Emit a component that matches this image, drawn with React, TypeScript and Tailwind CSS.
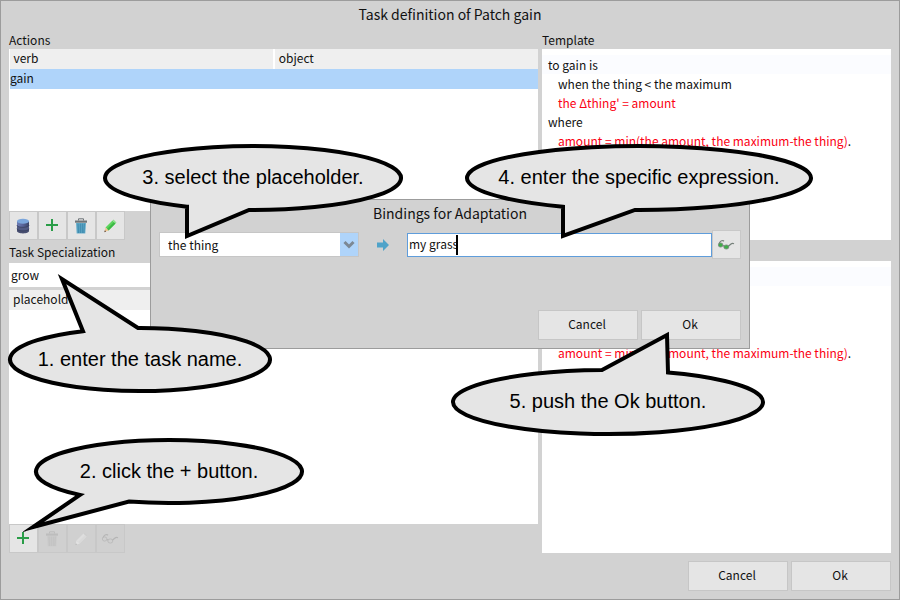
import type { ReactNode } from "react";

type IconProps = { muted?: boolean };

function DatabaseIcon() {
  return (
    <svg width="16" height="16" viewBox="0 0 16 16" aria-hidden="true">
      <defs>
        <linearGradient id="dbBody" x1="0" x2="1" y1="0" y2="0">
          <stop offset="0" stopColor="#6d7cb4" />
          <stop offset="0.45" stopColor="#5a669c" />
          <stop offset="1" stopColor="#3b4468" />
        </linearGradient>
      </defs>
      <path d="M2 10.500v2.500c0 1.300 2.700 2.400 6 2.400s6-1.100 6-2.400v-2.500z" fill="#474e70" />
      <path d="M2 6.800v3.700c0 1.300 2.700 2.300 6 2.300s6-1 6-2.300V6.800z" fill="#515a83" />
      <path d="M2 3v4c0 1.300 2.700 2.300 6 2.300s6-1 6-2.300V3z" fill="url(#dbBody)" />
      <path d="M2 7c0 1.300 2.700 2.300 6 2.300s6-1 6-2.300M2 10.600c0 1.300 2.700 2.300 6 2.300s6-1 6-2.300" fill="none" stroke="#343b58" strokeWidth="0.7" />
      <ellipse cx="8" cy="3.200" rx="6" ry="2.500" fill="#7ba6dc" />
    </svg>
  );
}

function PlusIcon() {
  return (
    <svg width="16" height="16" viewBox="0 0 16 16" className="-mt-px" aria-hidden="true">
      <path d="M8 2v12M2 8h12" stroke="#2a9d48" strokeWidth="2" fill="none" />
    </svg>
  );
}

function TrashIcon({ muted }: IconProps) {
  const body = muted ? "#cbcbcb" : "#66aecb";
  const stripe = muted ? "#c1c1c1" : "#3582a8";
  const lid = muted ? "#bdbdbd" : "#6d7478";
  return (
    <svg width="16" height="16" viewBox="0 0 16 16" aria-hidden="true">
      <path d="M5.500 2.500V.8h5v1.700" fill="none" stroke={lid} />
      <path d="M2 2.500h12v2.200H2z" fill={lid} />
      <path d="M3 5h10l-.7 10.500H3.700z" fill={body} />
      <path d="M5 5.500l.3 9.500M7.200 5.500V15M9.200 5.500V15M11.200 5.500l-.3 9.500" stroke={stripe} fill="none" />
    </svg>
  );
}

function PencilIcon({ muted }: IconProps) {
  return (
    <svg width="16" height="16" viewBox="0 0 16 16" aria-hidden="true">
      <path d="M10.500 2.500l3 3-7 7-3-3z" fill={muted ? "#dedede" : "#5bd55c"} />
      <path d="M12 4l1.500 1.500-7 7L5 11z" fill={muted ? "#d9d9d9" : "#3cb945"} />
      <path d="M3.500 9.500l3 3L2.500 14z" fill={muted ? "#e2e2e2" : "#f0c592"} />
      <path d="M2.900 12.300L2.300 14.200l1.800-.7z" fill={muted ? "#b5b5b5" : "#4a3b30"} />
      <path d="M10.500 2.500l1-1 3 3-1 1z" fill={muted ? "#cdcdcd" : "#8ee08d"} />
    </svg>
  );
}

function GlassesIcon({ muted }: IconProps) {
  const wire = muted ? "#b5b5b5" : "#75807a";
  return (
    <svg width="18" height="16" viewBox="0 0 18 16" aria-hidden="true">
      <path d="M2 7c.6-2 2.500-3.500 4-3.500l1 .8M11 9.500l3-2.500c1-.8 2-.8 3-.2" fill="none" stroke={wire} strokeWidth="1.200" />
      <path d="M5.500 8.500l2 .6" stroke={wire} strokeWidth="1.200" />
      <ellipse cx="3.600" cy="8" rx="2.300" ry="2.100" fill={muted ? "#cfcfcf" : "#3fae49"} stroke={wire} strokeWidth="0.700" />
      <ellipse cx="9.300" cy="10" rx="2.500" ry="2.100" fill={muted ? "#cfcfcf" : "#3fae49"} stroke={wire} strokeWidth="0.700" />
    </svg>
  );
}

function IconButton({ label, disabled, children }: { label: string; disabled?: boolean; children: ReactNode }) {
  return (
    <button
      type="button"
      aria-label={label}
      disabled={disabled}
      className="flex h-[29px] w-[29px] shrink-0 items-center justify-center border border-[#c8c8c8] bg-[#e5e5e5] pr-px disabled:bg-[#d0d0d0]"
    >
      {children}
    </button>
  );
}

function TextButton({ children }: { children: ReactNode }) {
  return (
    <button type="button" className="flex h-[30px] w-[100px] items-center justify-center border border-[#c6c6c6] bg-[#e5e5e5] pr-0.5 pb-0.5">
      {children}
    </button>
  );
}

type CalloutProps = {
  text: string;
  className: string;
  width: number;
  height: number;
  /** Horizontal positions where the tail leaves the ellipse. */
  from: number;
  to: number;
  tip: [number, number];
};

/** Speech balloon: an ellipse with a pointed tail on its upper or lower side. */
function Callout({ text, className, width, height, from, to, tip }: CalloutProps) {
  const rx = width / 2;
  const ry = height / 2;
  const below = tip[1] > ry;
  const edge = (x: number) => {
    const dy = ry * Math.sqrt(1 - ((x - rx) / rx) ** 2);
    return below ? ry + dy : ry - dy;
  };
  const sweep = below ? 0 : 1;
  const d = `M${from} ${edge(from)}L${tip[0]} ${tip[1]}L${to} ${edge(to)}A${rx} ${ry} 0 1 ${sweep} ${from} ${edge(from)}Z`;
  return (
    <div className={`pointer-events-none absolute z-20 flex items-center justify-center pb-0.5 ${className}`}>
      <svg width={width} height={height} className="absolute inset-0 overflow-visible" aria-hidden="true">
        <path d={d} fill="#e5e5e5" stroke="#000" strokeWidth="4" strokeMiterlimit="10" />
      </svg>
      <span className="relative whitespace-nowrap font-['Liberation_Sans',Arial,sans-serif] text-xl leading-6 text-black">{text}</span>
    </div>
  );
}

function AmountLine() {
  return (
    <div className="pl-4">
      <span className="text-[#fb0013]">amount = min(the amount, the maximum-the thing)</span>.
    </div>
  );
}

export default function App() {
  return (
    <div className="relative flex min-h-screen flex-col border border-[#9c9c9c] bg-[#d2d2d2] px-2 pb-2 font-['Noto_Sans_CJK_SC',sans-serif] text-xs leading-4 text-[#111]">
      <h1 className="pt-[3px] text-center text-sm leading-5">Task definition of Patch gain</h1>

      <main className="grid flex-1 grid-cols-[529fr_349fr] gap-1 pt-2">
        <section className="flex flex-col">
          <h2 className="pb-px">Actions</h2>
          <div className="h-[162px] bg-white">
            <table className="w-full table-fixed border-collapse text-left">
              <thead>
                <tr className="h-5 bg-[#efefef]">
                  <th className="w-1/2 border-r-2 border-white p-0 pb-0.5 pl-1 font-normal">verb</th>
                  <th className="p-0 pb-0.5 pl-1 font-normal">object</th>
                </tr>
              </thead>
              <tbody>
                <tr className="h-5 bg-[#afd4fa]">
                  <td className="border-l border-white p-0 pb-0.5">gain</td>
                  <td className="p-0" />
                </tr>
              </tbody>
            </table>
          </div>
          <div className="flex">
            <IconButton label="Inspect"><DatabaseIcon /></IconButton>
            <IconButton label="Add action"><PlusIcon /></IconButton>
            <IconButton label="Remove action"><TrashIcon /></IconButton>
            <IconButton label="Edit action"><PencilIcon /></IconButton>
          </div>
          <label htmlFor="task" className="pt-1 pb-[3px]">Task Specialization</label>
          <input id="task" defaultValue="grow" className="h-6 w-full bg-white px-0.5 pb-0.5 outline-none" />
          <div className="mt-[3px] flex-1 bg-white">
            <div className="h-5 bg-[#efefef] pt-px pl-1">placeholder</div>
          </div>
          <div className="flex">
            <IconButton label="Add binding"><PlusIcon /></IconButton>
            <IconButton label="Remove binding" disabled><TrashIcon muted /></IconButton>
            <IconButton label="Edit binding" disabled><PencilIcon muted /></IconButton>
            <IconButton label="Browse binding" disabled><GlassesIcon muted /></IconButton>
          </div>
        </section>

        <section className="flex flex-col">
          <h2 className="pb-px">Template</h2>
          <div className="h-[191px] bg-white pt-[6px] leading-[19px]">
            <div className="bg-[#fbfcff] pl-[6px]">to gain is</div>
            <div className="pl-4">when the thing &lt; the maximum</div>
            <div className="pl-4 text-[#fb0013]">the Δthing' = amount</div>
            <div className="pl-[6px]">where</div>
            <AmountLine />
          </div>
          <div className="mt-[21px] flex-1 bg-white pt-[6px] leading-[19px]">
            <div className="mb-[57px] h-[19px] bg-[#fbfcff]" />
            <AmountLine />
          </div>
        </section>
      </main>

      <footer className="flex justify-end gap-[3px] pt-2">
        <TextButton>Cancel</TextButton>
        <TextButton>Ok</TextButton>
      </footer>

      <Callout text="1. enter the task name." className="left-[9px] top-[327px] h-[63px] w-[260px]" width={260} height={63} from={73} to={128} tip={[52, -49]} />
      <Callout text="2. click the + button." className="left-[35px] top-[439px] h-[63px] w-[266px]" width={266} height={63} from={44} to={93} tip={[-3, 87]} />

      <div role="dialog" aria-labelledby="dialog-title" className="absolute top-[198px] left-1/2 z-10 flex h-[150px] w-[600px] -translate-x-1/2 flex-col border border-[#9c9c9c] bg-[#d2d2d2] px-2 pb-2">
        <h2 id="dialog-title" className="pt-[3px] text-center text-sm leading-5">Bindings for Adaptation</h2>
        <div className="flex items-center pt-[7px]">
          <div className="relative flex h-[25px] w-[200px] border border-[#c6c6c6]">
            <select aria-label="Placeholder" className="w-full appearance-none bg-white pl-2 outline-none">
              <option>the thing</option>
            </select>
            <span className="pointer-events-none absolute inset-y-0 right-0 flex w-[18px] items-center justify-center bg-[#afd4fa]">
              <svg width="12" height="10" viewBox="0 0 12 10" aria-hidden="true">
                <path d="M1.500 2L6 6.500 10.500 2" fill="none" stroke="#7c8894" strokeWidth="3" />
              </svg>
            </span>
          </div>
          <svg width="14" height="14" viewBox="0 0 14 14" className="mx-[17px] shrink-0" aria-hidden="true">
            <path d="M1 4.500h6V1l6 6-6 6V9.500H1z" fill="#4fa3c9" />
          </svg>
          <div className="relative flex h-6 flex-1">
            <input aria-label="Expression" defaultValue="my grass" className="h-6 w-full border border-[#5f9ddb] bg-white px-px pb-0.5 outline-none" />
            <span className="absolute top-0.5 left-[49px] h-5 w-0.5 bg-black" />
          </div>
          <IconButton label="Browse expression"><GlassesIcon /></IconButton>
        </div>
        <div className="mt-auto flex justify-end gap-[3px]">
          <TextButton>Cancel</TextButton>
          <TextButton>Ok</TextButton>
        </div>

        <Callout text="3. select the placeholder." className="-left-[46px] -top-[54px] h-[64px] w-[296px]" width={296} height={64} from={82} to={144} tip={[82, 90]} />
        <Callout text="4. enter the specific expression." className="left-[316px] -top-[54px] h-[64px] w-[344px]" width={344} height={64} from={96} to={168} tip={[96, 90]} />
        <Callout text="5. push the Ok button." className="left-[302px] top-[170px] h-[64px] w-[310px]" width={310} height={64} from={149} to={215} tip={[214, -35]} />
      </div>
    </div>
  );
}
